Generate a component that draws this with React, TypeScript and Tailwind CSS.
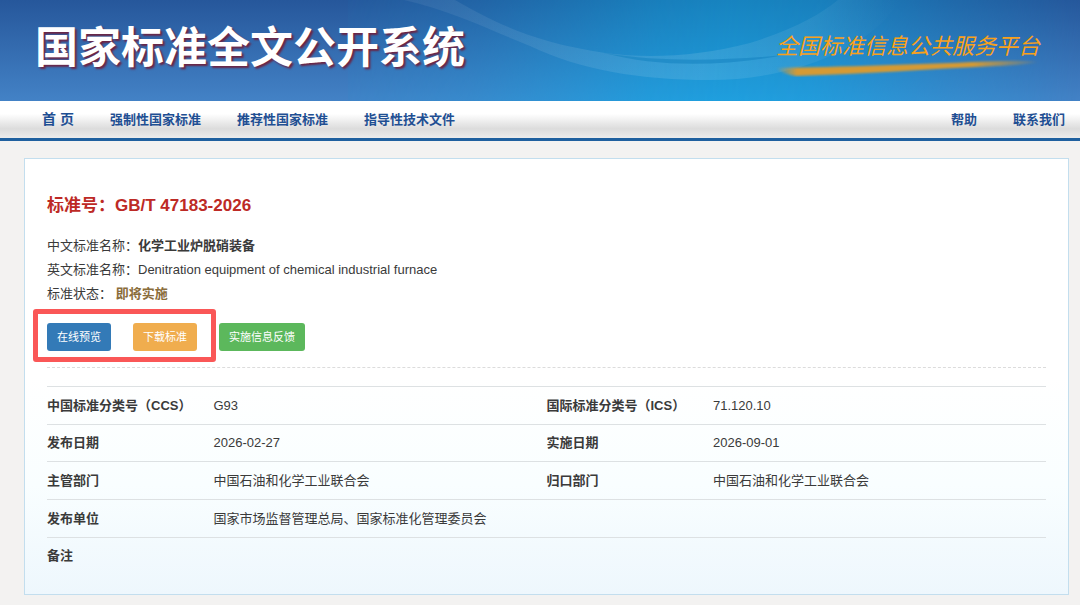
import React from 'react';

const leftLinks = ['强制性国家标准', '推荐性国家标准', '指导性技术文件'];
const rightLinks = ['帮助', '联系我们'];

const rows: [string, string, string?, string?][] = [
  ['中国标准分类号（CCS）', 'G93', '国际标准分类号（ICS）', '71.120.10'],
  ['发布日期', '2026-02-27', '实施日期', '2026-09-01'],
  ['主管部门', '中国石油和化学工业联合会', '归口部门', '中国石油和化学工业联合会'],
  ['发布单位', '国家市场监督管理总局、国家标准化管理委员会'],
  ['备注', ''],
];

function HeaderArt() {
  return (
    <svg className="absolute inset-0 h-full w-full" viewBox="0 0 1080 101" preserveAspectRatio="none" aria-hidden="true">
      <defs>
        <linearGradient id="sky" x1="0" y1="0" x2="0" y2="1">
          <stop offset="0" stopColor="#26579b" />
          <stop offset="1" stopColor="#4382c6" />
        </linearGradient>
        <linearGradient id="glow" x1="0" y1="0" x2="0" y2="1">
          <stop offset="0" stopColor="#1784c0" />
          <stop offset="1" stopColor="#1f9fde" />
        </linearGradient>
        <linearGradient id="fade" gradientUnits="userSpaceOnUse" x1="348" y1="0" x2="1080" y2="70">
          <stop offset="0" stopColor="#fff" stopOpacity="0.06" />
          <stop offset="0.18" stopColor="#fff" stopOpacity="0.3" />
          <stop offset="0.42" stopColor="#fff" stopOpacity="0.88" />
          <stop offset="0.52" stopColor="#fff" stopOpacity="1" />
          <stop offset="0.64" stopColor="#fff" stopOpacity="0.9" />
          <stop offset="0.82" stopColor="#fff" stopOpacity="0.4" />
          <stop offset="1" stopColor="#fff" stopOpacity="0" />
        </linearGradient>
        <mask id="glowMask">
          <rect x="348" width="732" height="101" fill="url(#fade)" />
        </mask>
        <linearGradient id="band" gradientUnits="userSpaceOnUse" x1="404" y1="0" x2="900" y2="0">
          <stop offset="0" stopColor="#fff" stopOpacity="0.06" />
          <stop offset="0.6" stopColor="#fff" stopOpacity="0.11" />
          <stop offset="0.8" stopColor="#fff" stopOpacity="0.07" />
          <stop offset="1" stopColor="#fff" stopOpacity="0" />
        </linearGradient>
      </defs>
      <rect width="1080" height="101" fill="url(#sky)" />
      <rect x="348" width="732" height="101" fill="url(#glow)" mask="url(#glowMask)" />
      <path d="M404 0H455C490 20 530 42 605 53C650 59 700 56 750 43C792 30 820 15 838 0H900C870 50 790 80 710 80C640 80 580 70 530 46C490 30 450 10 404 0Z" fill="url(#band)" />
      <path d="M604 53C660 68 725 66 785 55C730 60 665 63 604 53Z" fill="#1583c2" opacity="0.6" />
    </svg>
  );
}

function Row({ row }: { row: [string, string, string?, string?] }) {
  const [label, value, label2, value2] = row;
  return (
    <tr className="border-t border-[#dde1e3]">
      <th scope="row" className="w-1/6 text-left font-bold whitespace-nowrap">{label}</th>
      <td className="w-1/3" colSpan={label2 ? 1 : 3}>{value}</td>
      {label2 && <th scope="row" className="w-1/6 text-left font-bold whitespace-nowrap">{label2}</th>}
      {label2 && <td className="w-1/3">{value2}</td>}
    </tr>
  );
}

export default function App() {
  return (
    <div className="min-h-screen bg-[#f3f2f1] pb-[10px] font-['Liberation_Sans','Noto_Sans_CJK_SC',sans-serif] text-[13px] text-[#3a3a3a]">
      <header className="relative flex h-[101px] items-start justify-between overflow-hidden pr-10 pl-[35px]">
        <HeaderArt />
        <h1 className="relative text-[43px] leading-[96px] font-bold whitespace-nowrap text-white [text-shadow:2px_2px_2px_#6b2545]">
          国家标准全文公开系统
        </h1>
        <a href="#platform" className="relative flex flex-col pt-[35px] text-[22px] leading-6 whitespace-nowrap text-[#f9a11b] italic">
          全国标准信息公共服务平台
          <svg className="h-[18px] w-full" viewBox="0 0 264 18" preserveAspectRatio="none" aria-hidden="true">
            <defs>
              <linearGradient id="stroke" x1="0" y1="0" x2="1" y2="0">
                <stop offset="0" stopColor="#d49a35" stopOpacity="0" />
                <stop offset="0.08" stopColor="#d49a35" />
                <stop offset="0.75" stopColor="#d49a35" />
                <stop offset="1" stopColor="#d49a35" stopOpacity="0.1" />
              </linearGradient>
              <filter id="soft"><feGaussianBlur stdDeviation="0.8" /></filter>
            </defs>
            <path d="M0 9C60 8 150 5 225 2Q250 1 262 3Q250 6 220 7C150 10 90 15 20 17Q6 15 0 9Z" fill="url(#stroke)" filter="url(#soft)" />
          </svg>
        </a>
      </header>

      <nav className="flex items-center justify-between border-b-[3px] border-[#1f609f] bg-linear-to-b from-white from-35% via-[#dcdcdc] via-75% to-[#ececec] pr-[15px] pl-[42px] leading-[37px] font-bold text-[#1f4f93]">
        <div className="flex gap-9">
          <a href="#home" className="text-[14px]">首 页</a>
          {leftLinks.map((t) => <a key={t} href={`#${t}`}>{t}</a>)}
        </div>
        <div className="flex gap-9">
          {rightLinks.map((t) => <a key={t} href={`#${t}`}>{t}</a>)}
        </div>
      </nav>

      <main className="mt-[17px] mr-[11px] ml-6 border border-[#c3deee] bg-linear-to-b from-white from-50% via-[#f9feff] via-75% to-[#eef7fd] px-[22px] pt-8 pb-5">
        <h2 className="text-[17px] leading-[30px] font-bold text-[#bd2a25]">标准号：GB/T 47183-2026</h2>
        <div className="mt-[13px] leading-6">
          <p>中文标准名称：<b>化学工业炉脱硝装备</b></p>
          <p>英文标准名称：Denitration equipment of chemical industrial furnace</p>
          <p>标准状态： <b className="text-[#8a6d3b]">即将实施</b></p>
        </div>
        <div className="mt-[17px] flex gap-[22px] border-b border-dashed border-[#dcdcdc] pb-4 text-[11px] leading-7 text-white">
          <div className="relative flex gap-[22px]">
            <button className="rounded-[3px] bg-[#337ab7] px-[10px]">在线预览</button>
            <button className="rounded-[3px] bg-[#f0ad4e] px-[10px]">下载标准</button>
            <span className="pointer-events-none absolute -top-[14px] -right-[19px] -bottom-[11px] -left-[14px] rounded-[3px] border-[5px] border-[#fa5757]" />
          </div>
          <button className="rounded-[3px] bg-[#5cb85c] px-[10px]">实施信息反馈</button>
        </div>
        <table className="mt-[18px] h-[188px] w-full table-fixed border-collapse">
          <tbody>
            {rows.map((r) => <Row key={r[0]} row={r} />)}
          </tbody>
        </table>
      </main>
    </div>
  );
}
